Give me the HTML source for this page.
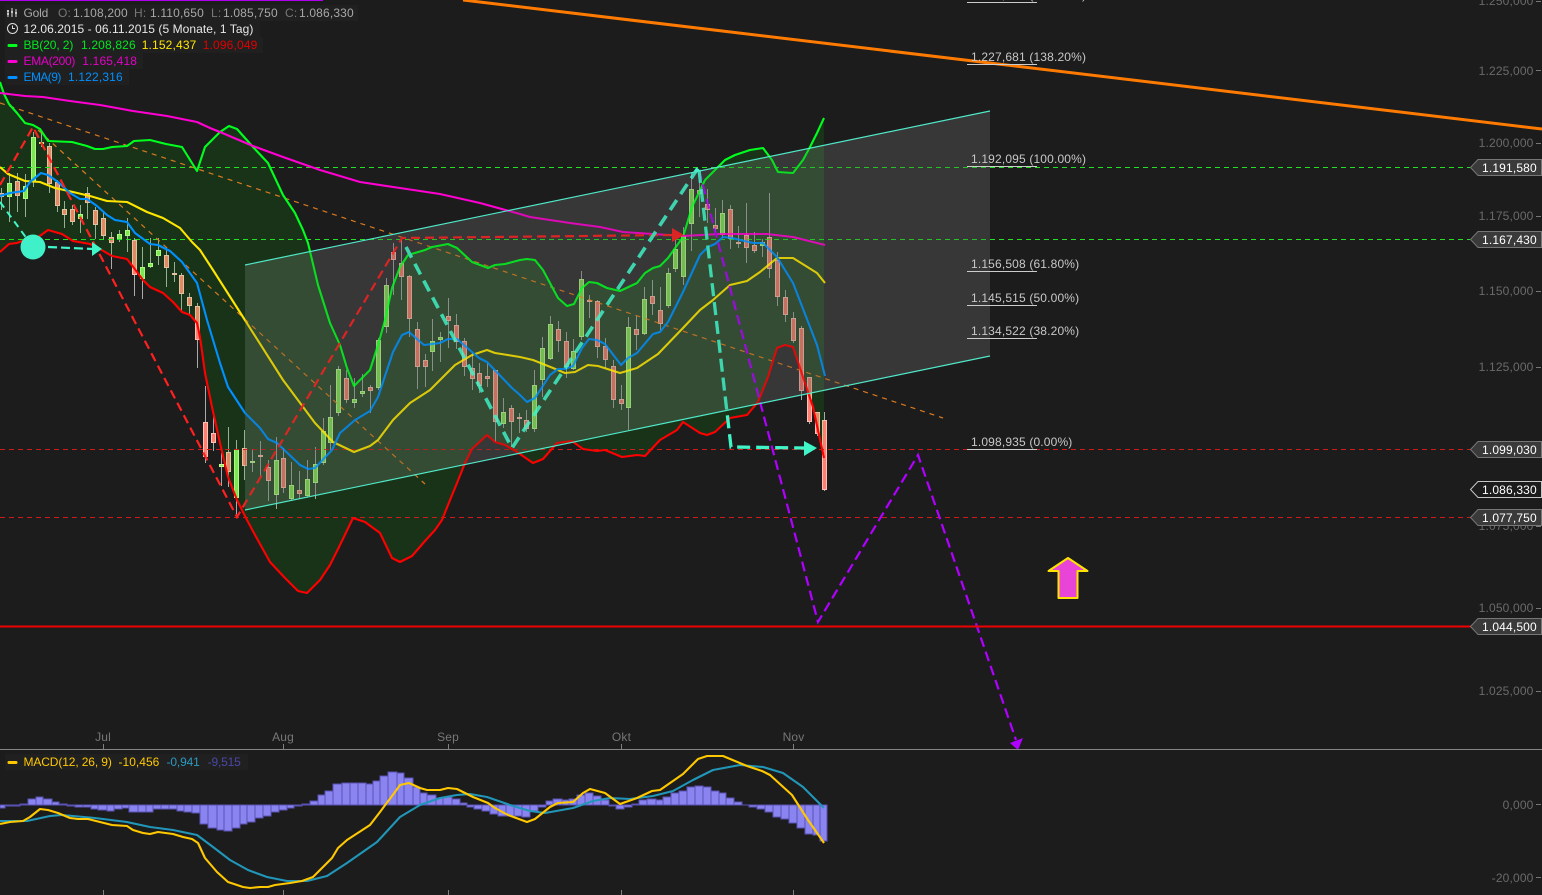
<!DOCTYPE html>
<html><head><meta charset="utf-8"><title>Gold</title>
<style>
html,body{margin:0;padding:0;background:#1c1c1c;width:1542px;height:895px;overflow:hidden}
svg{display:block}
text{font-family:"Liberation Sans",sans-serif;font-size:12px;letter-spacing:.16px}
.l{fill:none;stroke-linejoin:round;stroke-linecap:butt;stroke-width:2.1}
</style></head><body>
<svg width="1542" height="895" viewBox="0 0 1542 895" xmlns="http://www.w3.org/2000/svg">
<defs>
<clipPath id="ch"><polygon points="245,265 990,111 990,356 245,510"/></clipPath>
<path id="cloud" fill="#0cdc0a" fill-opacity=".12" d="M0 82L4 94 9 104 17 113 25 123 33 125 40 129 48 141 72 142 87 146 95 149 103 149 112 147 127 146 134 141 150 140 166 144 182 147 197 171 205 147 220 132 229 126 237 129 253 147 268 163 283 195 295 213 303 230 308 243 318 285 330 323 340 345 347 368 354 386 363 377 370 370 378 345 385 320 392 288 400 267 408 255 425 250 432 247 448 244 457 248 472 262 488 268 495 265 505 264 520 260 527 259 535 260 543 270 558 298 567 306 574 304 582 288 589 282 597 283 607 288 620 291 637 283 645 273 653 268 660 266 668 258 683 237 692 207 705 180 717 168 725 160 735 155 750 150 763 148 772 160 778 172 793 173 803 160 810 147 817 133 824 118 824 458 813 407 803 377 793 347 785 345 777 348 768 377 758 402 747 415 730 418 715 432 707 435 700 433 683 422 677 430 660 440 645 456 637 455 622 457 605 450 597 451 583 449 572 441 557 443 543 459 533 463 517 452 505 445 495 442 487 435 472 449 465 463 457 483 448 505 442 520 435 530 425 541 412 556 400 562 392 558 380 533 365 522 353 518 340 545 330 565 320 580 307 593 298 591 285 578 270 562 255 535 247 520 237 500 228 477 220 443 212 407 205 373 200 337 197 323 190 315 182 312 173 302 163 293 150 287 143 280 134 268 127 259 112 256 100 249 90 244 73 241 62 234 48 230 37 238 25 240 17 243 9 244 0 252Z"/>
<g id="candles">
<path shape-rendering="crispEdges" stroke="#aaa" stroke-width="1" fill="none" d="M1.5 188V210M9.5 173V222M17.5 173V212M25.5 174V217M33.5 132V187M41.5 132V147M49.5 143V193M57.5 180V212M64.5 201V228M72.5 205V225M80.5 205V233M87.5 187V219M95.5 207V239M103.5 213V239M111.5 232V269M119.5 230V242M127.5 218V252M134.5 238V296M142.5 247V299M150.5 238V268M158.5 238V265M166.5 250V287M174.5 262V282M181.5 273V312M189.5 293V314M197.5 303V368M205.5 386V463M213.5 415V451M221.5 453V486M228.5 427V487M236.5 440V517M244.5 430V480M252.5 449V472M260.5 441V476M268.5 460V501M276.5 437V509M283.5 448V493M291.5 462V501M299.5 471V499M307.5 460V497M315.5 447V499M323.5 418V465M330.5 385V450M338.5 366V416M346.5 370V403M354.5 378V408M362.5 374V397M370.5 385V413M378.5 338V390M386.5 278V333M393.5 243V295M401.5 240V300M409.5 275V337M417.5 322V389M425.5 354V387M432.5 319V371M440.5 332V362M448.5 298V348M456.5 314V349M464.5 338V376M472.5 353V390M479.5 363V393M487.5 363V387M495.5 370V442M503.5 398V428M511.5 405V447M519.5 413V433M526.5 410V432M534.5 370V432M542.5 337V397M550.5 316V360M558.5 321V352M566.5 332V378M573.5 339V370M581.5 271V340M589.5 295V318M597.5 300V358M605.5 338V368M613.5 360V408M621.5 385V410M628.5 317V430M636.5 316V350M644.5 287V335M652.5 280V315M660.5 287V330M668.5 268V308M675.5 240V272M683.5 227V285M691.5 173V251M699.5 180V217M707.5 189V223M715.5 208V232M722.5 200V238M730.5 205V249M738.5 226V248M746.5 203V263M754.5 232V253M762.5 239V257M769.5 193V278M777.5 252V306M785.5 290V322M793.5 312V343M801.5 326V400M809.5 377V424M817.5 412V436M824.5 412V491"/>
<path shape-rendering="crispEdges" fill="#8de85e" stroke="#c4ff96" stroke-width="1" d="M7.5 183.5h4v13h-4zM23.5 186.5h4v12h-4zM31.5 137.5h4v44h-4zM39.5 142.5h4v1h-4zM78.5 214.5h4v4h-4zM117.5 234.5h4v5h-4zM125.5 230.5h4v5h-4zM140.5 267.5h4v11h-4zM148.5 263.5h4v3h-4zM156.5 250.5h4v5h-4zM219.5 464.5h4v2h-4zM234.5 449.5h4v48h-4zM250.5 461.5h4v1h-4zM274.5 460.5h4v34h-4zM289.5 485.5h4v13h-4zM305.5 479.5h4v16h-4zM313.5 464.5h4v18h-4zM321.5 431.5h4v31h-4zM328.5 417.5h4v25h-4zM336.5 369.5h4v43h-4zM352.5 399.5h4v3h-4zM360.5 391.5h4v2h-4zM376.5 340.5h4v47h-4zM384.5 285.5h4v41h-4zM430.5 341.5h4v10h-4zM438.5 337.5h4v2h-4zM501.5 412.5h4v11h-4zM532.5 385.5h4v43h-4zM540.5 348.5h4v31h-4zM548.5 324.5h4v34h-4zM571.5 351.5h4v17h-4zM579.5 279.5h4v57h-4zM626.5 327.5h4v80h-4zM642.5 299.5h4v34h-4zM666.5 273.5h4v32h-4zM673.5 249.5h4v19h-4zM681.5 236.5h4v40h-4zM689.5 189.5h4v34h-4zM720.5 213.5h4v21h-4zM760.5 242.5h4v3h-4z"/>
<path shape-rendering="crispEdges" fill="#ff7f72" stroke="#ffc0b4" stroke-width="1" d="M-.5 193.5h4v3h-4zM15.5 181.5h4v14h-4zM47.5 146.5h4v37h-4zM55.5 182.5h4v23h-4zM62.5 209.5h4v5h-4zM70.5 209.5h4v12h-4zM85.5 193.5h4v9h-4zM93.5 210.5h4v14h-4zM101.5 218.5h4v17h-4zM109.5 237.5h4v5h-4zM132.5 240.5h4v34h-4zM164.5 255.5h4v12h-4zM172.5 273.5h4v1h-4zM179.5 275.5h4v18h-4zM187.5 297.5h4v8h-4zM195.5 306.5h4v33h-4zM203.5 422.5h4v34h-4zM211.5 433.5h4v9h-4zM226.5 452.5h4v19h-4zM242.5 448.5h4v17h-4zM258.5 455.5h4v1h-4zM266.5 467.5h4v13h-4zM281.5 458.5h4v29h-4zM297.5 490.5h4v3h-4zM344.5 378.5h4v21h-4zM368.5 387.5h4v3h-4zM391.5 252.5h4v7h-4zM399.5 263.5h4v13h-4zM407.5 276.5h4v42h-4zM415.5 329.5h4v37h-4zM423.5 360.5h4v6h-4zM446.5 316.5h4v4h-4zM454.5 325.5h4v16h-4zM462.5 341.5h4v25h-4zM470.5 368.5h4v10h-4zM477.5 373.5h4v12h-4zM485.5 376.5h4v2h-4zM493.5 370.5h4v51h-4zM509.5 408.5h4v13h-4zM517.5 417.5h4v1h-4zM524.5 420.5h4v8h-4zM556.5 329.5h4v11h-4zM564.5 341.5h4v25h-4zM587.5 300.5h4v1h-4zM595.5 301.5h4v45h-4zM603.5 346.5h4v13h-4zM611.5 366.5h4v33h-4zM619.5 399.5h4v4h-4zM634.5 329.5h4v5h-4zM650.5 296.5h4v7h-4zM658.5 310.5h4v13h-4zM697.5 190.5h4v3h-4zM705.5 204.5h4v5h-4zM713.5 225.5h4v3h-4zM728.5 209.5h4v29h-4zM736.5 242.5h4v1h-4zM744.5 235.5h4v12h-4zM752.5 245.5h4v5h-4zM767.5 237.5h4v31h-4zM775.5 260.5h4v36h-4zM783.5 297.5h4v17h-4zM791.5 318.5h4v22h-4zM799.5 328.5h4v62h-4zM807.5 377.5h4v44h-4zM815.5 412.5h4v21h-4zM822.5 420.5h4v69h-4z"/>
</g>
<g id="lines">
<path fill="none" stroke="#22e022" stroke-width="1" stroke-dasharray="5 4" d="M0 167.5H1470M0 239.5H1470"/>
<path fill="none" stroke="#cc1c1c" stroke-width="1" stroke-dasharray="5 4" d="M0 449.5H1470M0 517.5H1470"/>
<path fill="none" stroke="#d87a20" stroke-width="1.2" stroke-dasharray="5 5" d="M0 103L943 418M38 130L425 484"/>
<polyline class="l" stroke="#00ff1e" points="0,82 4,94 9,104 17,113 25,123 33,125 40,129 48,141 72,142 87,146 95,149 103,149 112,147 127,146 134,141 150,140 166,144 182,147 197,171 205,147 220,132 229,126 237,129 253,147 268,163 283,195 295,213 303,230 308,243 318,285 330,323 340,345 347,368 354,386 363,377 370,370 378,345 385,320 392,288 400,267 408,255 425,250 432,247 448,244 457,248 472,262 488,268 495,265 505,264 520,260 527,259 535,260 543,270 558,298 567,306 574,304 582,288 589,282 597,283 607,288 620,291 637,283 645,273 653,268 660,266 668,258 683,237 692,207 705,180 717,168 725,160 735,155 750,150 763,148 772,160 778,172 793,173 803,160 810,147 817,133 824,118"/>
<polyline class="l" stroke="#ff0000" points="0,252 9,244 17,243 25,240 37,238 48,230 62,234 73,241 90,244 100,249 112,256 127,259 134,268 143,280 150,287 163,293 173,302 182,312 190,315 197,323 200,337 205,373 212,407 220,443 228,477 237,500 247,520 255,535 270,562 285,578 298,591 307,593 320,580 330,565 340,545 353,518 365,522 380,533 392,558 400,562 412,556 425,541 435,530 442,520 448,505 457,483 465,463 472,449 487,435 495,442 505,445 517,452 533,463 543,459 557,443 572,441 583,449 597,451 605,450 622,457 637,455 645,456 660,440 677,430 683,422 700,433 707,435 715,432 730,418 747,415 758,402 768,377 777,348 785,345 793,347 803,377 813,407 824,458"/>
<polyline class="l" stroke="#ffe600" points="0,167 8,174 25,181 40,182 55,188 73,192 90,196 107,201 127,202 147,212 163,218 180,228 192,242 200,250 213,270 243,317 283,380 315,423 333,442 354,452 370,446 378,440 393,420 410,403 430,390 455,365 472,355 487,350 495,353 520,357 533,360 553,368 565,373 575,372 588,365 598,366 620,373 637,368 658,354 683,328 700,310 713,300 730,285 747,281 760,272 777,258 793,258 817,273 825,283"/>
<polyline class="l" stroke="#ff00d2" points="0,93 25,96 43,97 70,101 100,105 133,111 167,116 197,122 210,128 220,132 253,146 283,157 320,170 360,182 400,188 440,194 480,203 520,214 530,217 570,223 600,227 623,232 653,234 683,236 720,234 767,234 793,237 825,245"/>
<polyline class="l" stroke="#0090ff" points="0,196 10,193 24,191 30,182 41,173 48,175 58,182 70,193 80,199 87,199 97,206 107,215 115,220 127,222 135,233 150,244 158,245 170,251 182,262 197,283 207,320 220,363 228,387 245,413 260,428 268,439 277,443 300,465 308,469 315,468 332,450 340,433 355,420 370,411 378,397 393,352 402,335 409,332 424,345 440,343 448,339 457,339 479,358 487,362 512,388 520,395 527,402 535,398 550,375 558,369 565,369 573,366 582,348 589,339 597,340 605,344 621,365 628,358 637,353 653,334 660,332 668,322 683,292 700,255 708,247 715,244 723,237 732,238 753,243 763,243 777,257 793,283 817,345 825,376"/>
<path fill="none" stroke="#ff2020" stroke-width="2.2" stroke-dasharray="9 5" d="M0 185L33 127L237 517L402 238L673 235"/>
<path fill="#ff2020" d="M672 228L684 235L672 242Z"/>
<path fill="none" stroke="#b000ff" stroke-width="2.2" stroke-dasharray="10 5" d="M699 170L818 622L918 455L1016 740"/>
<path fill="none" stroke="#40f5c8" stroke-width="2" stroke-dasharray="7 5" d="M0 202L33 247"/>
<path fill="none" stroke="#40f5c8" stroke-width="2.2" stroke-dasharray="9 4" d="M48 247L93 249"/>
<path fill="#40f5c8" d="M92 242L102 249L92 256Z"/>
<circle cx="33" cy="247" r="12.5" fill="#40f0c8"/>
<path fill="none" stroke="#40f5c8" stroke-width="3.6" stroke-dasharray="12 7" d="M406 247L512 448L698 168"/>
<path fill="none" stroke="#40f5c8" stroke-width="3.3" stroke-dasharray="13 6" d="M699 170L731 447L806 448"/>
<path fill="#40f5c8" d="M804 441L817 448L804 456Z"/>
</g>
</defs>

<rect width="1542" height="895" fill="#1c1c1c"/>
<use href="#candles"/>
<use href="#cloud"/>
<use href="#lines"/>
<g clip-path="url(#ch)">
<rect x="240" y="100" width="760" height="420" fill="#1c1c1c"/>
<use href="#cloud"/>
<polygon points="245,265 990,111 990,356 245,510" fill="#ffffff" fill-opacity=".12"/>
<use href="#candles" opacity=".72"/>
<use href="#lines" opacity=".82"/>
</g>
<path fill="none" stroke="#50e8c8" stroke-width="1.2" d="M245 265L990 111M245 510L990 356"/>

<path fill="#b000ff" d="M1010 743L1023 738L1018 750Z"/>
<path fill="none" stroke="#ff7a00" stroke-width="3" d="M463 0L1542 129"/>
<rect x="0" y="0" width="323" height="1" fill="#b000f0"/>
<path fill="none" stroke="#ee0000" stroke-width="2" d="M0 626.5H1471M1538 626.5H1542"/>

<path fill="#e845d8" stroke="#ffe400" stroke-width="2" stroke-linejoin="round" d="M1068 558L1087.5 571H1077.5V598H1058.5V571H1048.5Z"/>

<!-- fib -->
<path shape-rendering="crispEdges" fill="none" stroke="#ccc" stroke-width="1" d="M967 2.5H1037M967 64.5H1037M967 166.5H1037M967 271.5H1037M967 305.5H1037M967 338.5H1037M967 449.5H1037"/>
<g fill="#c8c8c8">
<text x="971" y="-1">1.249,667 (161.80%)</text>
<text x="971" y="61">1.227,681 (138.20%)</text>
<text x="971" y="163">1.192,095 (100.00%)</text>
<text x="971" y="268">1.156,508 (61.80%)</text>
<text x="971" y="302">1.145,515 (50.00%)</text>
<text x="971" y="335">1.134,522 (38.20%)</text>
<text x="971" y="446">1.098,935 (0.00%)</text>
</g>

<!-- right axis -->
<g fill="#6a6a6a" text-anchor="end">
<text x="1533.5" y="5">1.250,000</text>
<text x="1533.5" y="75">1.225,000</text>
<text x="1533.5" y="147">1.200,000</text>
<text x="1533.5" y="220">1.175,000</text>
<text x="1533.5" y="295">1.150,000</text>
<text x="1533.5" y="371">1.125,000</text>
<text x="1533.5" y="530">1.075,000</text>
<text x="1533.5" y="612">1.050,000</text>
<text x="1533.5" y="695">1.025,000</text>
<text x="1533.5" y="809">0,000</text>
<text x="1533.5" y="882">-20,000</text>
</g>
<path shape-rendering="crispEdges" fill="none" stroke="#777" stroke-width="1" d="M1536 1.5H1541M1536 70.5H1541M1536 143.5H1541M1536 216.5H1541M1536 291.5H1541M1536 367.5H1541M1536 526.5H1541M1536 608.5H1541M1536 691.5H1541M1536 804.5H1541M1536 877.5H1541"/>

<!-- tags -->
<g fill="#3a3a3a" stroke="#777" stroke-width="1">
<path d="M1470.5 167.5L1478 159.5H1541.5V175.5H1478Z"/>
<path d="M1470.5 239.5L1478 231.5H1541.5V247.5H1478Z"/>
<path d="M1470.5 449.5L1478 441.5H1541.5V457.5H1478Z"/>
<path d="M1470.5 517.5L1478 509.5H1541.5V525.5H1478Z"/>
<path d="M1470.5 626.5L1478 618.5H1541.5V634.5H1478Z"/>
<path fill="#1c1c1c" stroke="#c8c8c8" d="M1470.5 489.5L1478 481.5H1541.5V497.5H1478Z"/>
</g>
<g fill="#fff">
<text x="1482" y="172">1.191,580</text>
<text x="1482" y="244">1.167,430</text>
<text x="1482" y="454">1.099,030</text>
<text x="1482" y="494">1.086,330</text>
<text x="1482" y="522">1.077,750</text>
<text x="1482" y="631">1.044,500</text>
</g>

<!-- x axis -->
<rect x="0" y="749" width="1542" height="1" fill="#858585"/>
<g fill="#777" text-anchor="middle">
<text x="103" y="741">Jul</text>
<text x="283" y="741">Aug</text>
<text x="448" y="741">Sep</text>
<text x="621.5" y="741">Okt</text>
<text x="793.5" y="741">Nov</text>
</g>
<path shape-rendering="crispEdges" fill="none" stroke="#808080" stroke-width="1" d="M103.5 744V749M283.5 744V749M448.5 744V749M621.5 744V749M793.5 744V749M103.5 890V895M283.5 890V895M448.5 890V895M621.5 890V895M793.5 890V895"/>

<!-- MACD -->
<path shape-rendering="crispEdges" fill="#8a84f0" stroke="#5a52b4" stroke-width="1" d="M0 805V808h5V805zM5 805V806h8V805zM13 805V806h7V805zM20 805V804h8V805zM28 805V799h8V805zM36 805V797h7V805zM43 805V799h9V805zM52 805V802h7V805zM59 805V804h8V805zM67 805V806h8V805zM75 805V807h8V805zM83 805V807h8V805zM91 805V809h7V805zM98 805V810h9V805zM107 805V811h7V805zM114 805V809h8V805zM122 805V808h7V805zM129 805V812h9V805zM138 805V812h8V805zM146 805V812h7V805zM153 805V809h8V805zM161 805V809h8V805zM169 805V809h8V805zM177 805V811h7V805zM184 805V812h8V805zM192 805V813h8V805zM200 805V824h8V805zM208 805V828h9V805zM217 805V830h7V805zM224 805V831h8V805zM232 805V828h8V805zM240 805V824h7V805zM247 805V822h8V805zM255 805V818h8V805zM263 805V816h8V805zM271 805V812h8V805zM279 805V810h8V805zM287 805V808h7V805zM294 805V806h8V805zM302 805V804h8V805zM310 805V801h8V805zM318 805V795h7V805zM325 805V791h8V805zM333 805V784h9V805zM342 805V783h8V805zM350 805V783h8V805zM358 805V783h8V805zM366 805V784h7V805zM373 805V781h7V805zM380 805V776h8V805zM388 805V772h9V805zM397 805V773h7V805zM404 805V778h9V805zM413 805V787h7V805zM420 805V793h7V805zM427 805V795h9V805zM436 805V798h7V805zM443 805V797h9V805zM452 805V799h8V805zM460 805V803h7V805zM467 805V807h7V805zM474 805V809h8V805zM482 805V811h8V805zM490 805V814h8V805zM498 805V816h8V805zM506 805V816h8V805zM514 805V816h8V805zM522 805V817h8V805zM530 805V811h8V805zM538 805V807h8V805zM546 805V801h7V805zM553 805V799h9V805zM562 805V800h7V805zM569 805V799h8V805zM577 805V795h8V805zM585 805V793h8V805zM593 805V796h8V805zM601 805V800h8V805zM609 805V806h7V805zM616 805V809h8V805zM624 805V807h8V805zM632 805V804h7V805zM639 805V800h8V805zM647 805V799h9V805zM656 805V800h7V805zM663 805V797h8V805zM671 805V793h8V805zM679 805V791h8V805zM687 805V787h8V805zM695 805V786h8V805zM703 805V787h8V805zM711 805V791h8V805zM719 805V793h7V805zM726 805V798h8V805zM734 805V802h8V805zM742 805V805h7V805zM749 805V807h8V805zM757 805V809h8V805zM765 805V812h8V805zM773 805V817h8V805zM781 805V819h8V805zM789 805V823h8V805zM797 805V828h8V805zM805 805V834h8V805zM813 805V835h7V805zM820 805V841h7V805z"/>
<polyline class="l" stroke="#2196b8" points="0,821 27,821 50,816 62,815 95,818 127,822 150,827 173,830 197,835 213,847 230,860 248,870 267,877 287,881 307,881 327,876 347,863 377,842 400,817 420,805 440,798 457,795 470,794 487,797 510,805 530,811 545,813 573,808 593,801 610,798 630,799 653,796 673,791 693,780 713,770 740,765 763,767 783,773 803,787 824,808"/>
<polyline class="l" stroke="#ffc800" points="0,824 10,822 23,821 30,817 40,809 48,810 58,813 70,818 78,819 88,819 100,822 112,825 127,826 133,830 143,833 150,834 158,832 173,834 183,837 192,839 198,843 205,858 217,872 228,882 243,887 250,888 260,887 268,887 275,885 290,883 302,881 313,877 332,858 338,848 347,840 370,825 380,812 395,792 400,785 409,783 420,788 427,790 440,790 448,788 457,789 473,797 488,803 495,808 508,815 527,822 535,819 550,807 558,803 573,802 583,793 590,789 605,793 620,804 637,798 652,791 660,790 683,774 698,759 707,756 723,756 747,766 762,771 770,775 792,795 808,820 824,843"/>

<!-- legend -->
<g fill="#202020">
<rect x="5" y="5" width="353" height="16"/>
<rect x="5" y="21" width="255" height="16"/>
<rect x="5" y="37" width="258" height="16"/>
<rect x="5" y="53" width="138" height="16"/>
<rect x="5" y="69" width="124" height="16"/>
<rect x="5" y="754" width="243" height="16"/>
</g>
<g fill="none" stroke="#ddd" stroke-width="1">
<path d="M8 10V17M12 8V17M16 9V17"/>
<path d="M7 11h2M7 14h2M11 12h2M15 13h2" stroke-width="1.6"/>
<circle cx="12.5" cy="28.5" r="5"/>
<path d="M12.5 25.5V28.5H15"/>
</g>
<g stroke-width="3" stroke-linecap="round" fill="none">
<path stroke="#00ff1e" d="M9 45.5H16"/>
<path stroke="#ff00d2" d="M9 61.5H16"/>
<path stroke="#0090ff" d="M9 77.5H16"/>
<path stroke="#ffc800" d="M9 762.5H16"/>
</g>
<text x="23.5" y="17" fill="#a8a8a8" textLength="25">Gold</text>
<text x="58" y="17" fill="#777">O:</text><text x="73" y="17" fill="#a8a8a8">1.108,200</text>
<text x="134" y="17" fill="#777">H:</text><text x="150" y="17" fill="#a8a8a8">1.110,650</text>
<text x="211" y="17" fill="#777">L:</text><text x="223" y="17" fill="#a8a8a8">1.085,750</text>
<text x="285" y="17" fill="#777">C:</text><text x="299" y="17" fill="#a8a8a8">1.086,330</text>
<text x="23.5" y="33" fill="#e8e8e8" textLength="230">12.06.2015 - 06.11.2015 (5 Monate, 1 Tag)</text>
<text x="23.5" y="49" fill="#00e81e" textLength="50">BB(20, 2)</text><text x="81" y="49" fill="#00e81e">1.208,826</text>
<text x="141.7" y="49" fill="#ffe600">1.152,437</text><text x="202.7" y="49" fill="#e00000">1.096,049</text>
<text x="23.5" y="65" fill="#e600c8" textLength="52">EMA(200)</text><text x="82.3" y="65" fill="#e600c8">1.165,418</text>
<text x="23.5" y="81" fill="#0090ff" textLength="38">EMA(9)</text><text x="68" y="81" fill="#0090ff">1.122,316</text>
<text x="23.5" y="766" fill="#ffc800" textLength="88.5">MACD(12, 26, 9)</text>
<text x="118.5" y="766" fill="#ffc800" textLength="41">-10,456</text>
<text x="166.5" y="766" fill="#2a9ac0" textLength="33.5">-0,941</text>
<text x="207.7" y="766" fill="#4a48a8" textLength="33.3">-9,515</text>
</svg>
</body></html>
